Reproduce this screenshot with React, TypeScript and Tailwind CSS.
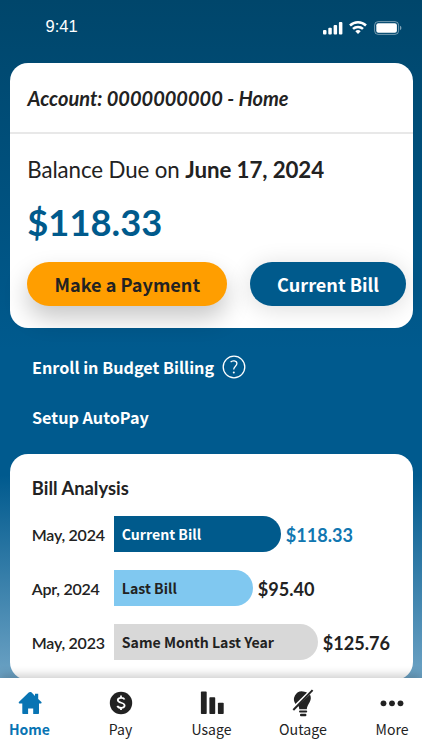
import type { ReactNode } from "react";

const lato = "font-['Lato','Liberation_Sans',sans-serif]";
const source = "font-['Noto_Sans_CJK_SC','Noto_Sans',sans-serif]";

function StatusBar() {
  return (
    <header className="flex h-[63.4px] shrink-0 items-start justify-between pl-[45.5px] pr-[20.5px] pt-[16px] text-white">
      <span className="font-['Liberation_Sans',sans-serif] text-[16.5px] leading-[20px]">9:41</span>
      <div className="flex items-center gap-[6.5px] pt-[5px]">
        <svg width="20" height="14" viewBox="0 0 20 14" fill="currentColor">
          <rect x="0" y="9" width="3.5" height="4.5" rx="1" />
          <rect x="5.3" y="6.8" width="3.5" height="6.7" rx="1" />
          <rect x="10.6" y="4" width="3.5" height="9.5" rx="1" />
          <rect x="15.9" y="1" width="3.5" height="12.5" rx="1" />
        </svg>
        <svg width="18" height="14" viewBox="0 0 18 14" fill="none" stroke="currentColor" strokeWidth="2.5">
          <path d="M1 4.5a11.6 11.6 0 0 1 16 0" />
          <path d="M4 7.9a7.2 7.2 0 0 1 10 0" />
          <path d="M6.3 10.2a4 4 0 0 1 5.4 0L9 13z" fill="currentColor" stroke="none" />
        </svg>
        <svg width="28" height="14" viewBox="0 0 28 14" fill="none">
          <rect x=".6" y=".6" width="24" height="12.8" rx="3.6" stroke="white" strokeOpacity=".45" />
          <rect x="2.3" y="2.3" width="20.6" height="9.4" rx="2" fill="white" />
          <path d="M26 4.8v4.4a2.4 2.4 0 0 0 0-4.4" fill="white" fillOpacity=".5" />
        </svg>
      </div>
    </header>
  );
}

const bills = [
  { date: "May, 2024", label: "Current Bill", amount: "$118.33", bar: "w-[167px] bg-[#005a8c] text-white", price: "text-[#1177b1]" },
  { date: "Apr, 2024", label: "Last Bill", amount: "$95.40", bar: "w-[139px] bg-[#80c8f0] text-[#222]", price: "text-[#222]" },
  { date: "May, 2023", label: "Same Month Last Year", amount: "$125.76", bar: "w-[204px] bg-[#d8d8d8] text-[#222]", price: "text-[#222]" },
];

function Tab({ label, className, labelClass, children }: { label: string; className: string; labelClass: string; children: ReactNode }) {
  return (
    <div className={`flex flex-col items-center pt-[10px] ${className}`}>
      <svg width="30" height="30" viewBox="0 0 30 30" fill="currentColor">{children}</svg>
      <span className={`mt-px whitespace-nowrap leading-[20px] ${source} ${labelClass}`}>{label}</span>
    </div>
  );
}

export default function App() {
  return (
    <div className={`flex h-[750px] w-[422px] flex-col overflow-hidden bg-[linear-gradient(180deg,#00466b_0px,#005a8e_350px,#005a8e_475px,#6ca2c4_678px)] text-[#222] ${lato}`}>
      <StatusBar />
      <section className="ml-[9.5px] h-[265px] w-[403.2px] shrink-0 rounded-[18px] bg-white">
        <div className="flex h-[70.5px] items-center border-b-2 border-[#e8e8e8] pl-[18px] text-[20px] font-bold italic leading-6">
          <span className="whitespace-nowrap">Account: 0000000000 - Home</span>
        </div>
        <div className="pl-[17.8px]">
          <p className="mt-[22px] whitespace-nowrap text-[22.3px] leading-[28px] tracking-[-0.1px]">Balance Due on <span className="font-bold">June 17, 2024</span></p>
          <p className="mt-[17px] text-[36.3px] font-bold leading-[43px] text-[#005a8c]">$118.33</p>
          <div className={`mt-[18px] flex gap-[22.7px] text-[18.1px] font-bold leading-[44px] ${source}`}>
            <button className="h-[44px] w-[200px] rounded-full bg-[#ff9e00] text-center text-[#222] shadow-[0_12px_24px_rgba(0,0,0,0.22)]">Make a Payment</button>
            <button className="h-[44px] w-[156px] rounded-full bg-[#005a8c] text-center text-white shadow-[0_3px_24px_rgba(0,0,0,0.14)]">Current Bill</button>
          </div>
        </div>
      </section>
      <nav className={`h-[126px] shrink-0 pl-8 pt-[25.4px] text-[16.2px] font-bold leading-[26px] text-white ${source}`}>
        <div className="flex items-center gap-2">
          <span>Enroll in Budget Billing</span>
          <svg width="24" height="24" viewBox="0 0 24 24" fill="none" stroke="currentColor" strokeWidth="1.3">
            <circle cx="12" cy="12" r="10.8" />
            <path d="M8.6 7.1c1.8-2.1 6.3-1.5 6.3 1.5 0 2.6-3.2 2.8-3.2 6" />
            <circle cx="11.8" cy="17.6" r="1" fill="currentColor" stroke="none" />
          </svg>
        </div>
        <div className="mt-[24px]">Setup AutoPay</div>
      </nav>
      <section className="ml-[9.5px] h-[226px] w-[403.2px] shrink-0 rounded-[18px] bg-white pl-[22.3px] pt-[22px]">
        <h2 className="text-[18.4px] font-bold leading-6">Bill Analysis</h2>
        <div className="mt-[16px] flex flex-col gap-[18px]">
          {bills.map((b) => (
            <div key={b.date} className="flex h-9 items-center">
              <span className="w-[82px] shrink-0 whitespace-nowrap pt-px text-[16px] font-semibold tracking-[-0.25px] text-[#222]">{b.date}</span>
              <div className={`flex h-9 shrink-0 items-center whitespace-nowrap rounded-r-full pl-2 text-[14.1px] font-bold ${source} ${b.bar}`}>{b.label}</div>
              <span className={`ml-[5px] pt-[2px] text-[18.1px] font-bold ${b.price}`}>{b.amount}</span>
            </div>
          ))}
        </div>
      </section>
      <footer className="relative -mt-[2.3px] flex h-[72px] shrink-0 bg-white shadow-[0_-3px_9px_rgba(0,0,0,0.2)]">
        <Tab label="Home" className="w-[59px] text-[#0874b3]" labelClass="font-bold text-[14px]">
          <path d="M15 4.1q.7-.5 1.4.2L20 7.9V5.7h3.2v5.2l3.2 3.2q.8 1.2-.5 1.3H24v9.9q0 .8-.8.8h-5v-5.5h-5.1v5.5h-5q-.8 0-.8-.8v-9.9H4.4q-1.2-.2-.5-1.3L13.7 4.6Z" />
        </Tab>
        <Tab label="Pay" className="w-[123px]" labelClass="text-[14px]">
          <circle cx="15" cy="15" r="11.2" />
          <path d="M18.5 11.5c-.8-2.3-6.7-2.2-6.7.6 0 3.5 6.8 1.8 6.8 5.4 0 3-6.2 3-7.3.3M15 7.6v2.1m0 10.2V22" fill="none" stroke="white" strokeWidth="1.8" />
        </Tab>
        <Tab label="Usage" className="w-[59px]" labelClass="text-[14px]">
          <rect x="3.9" y="3.6" width="5.8" height="22.5" rx=".8" />
          <rect x="12.4" y="9.2" width="5.8" height="16.9" rx=".8" />
          <rect x="20.9" y="14.8" width="5.8" height="11.3" rx=".8" />
        </Tab>
        <Tab label="Outage" className="w-[124px]" labelClass="text-[14.2px]">
          <path d="M14.8 3.4a8 8 0 0 1 5 1.5L7.8 16.4A8 8 0 0 1 14.8 3.4Z" />
          <path d="M22 6.4c2.9 6.6-2.8 8.8-3.2 14.8h-7.5q0-2-1.2-3.6Z" />
          <path d="M4.7 19.9 23 1.7" fill="none" stroke="white" strokeWidth="1.6" />
          <path d="M5.3 22 24.6 2.1" fill="none" stroke="currentColor" strokeWidth="2" />
          <rect x="11" y="22.4" width="8.2" height="2.1" rx="1" />
          <rect x="12" y="25.7" width="6.4" height="2.5" rx="1" />
        </Tab>
        <Tab label="More" className="w-[54px]" labelClass="text-[14px]">
          <circle cx="6.5" cy="15.3" r="2.9" /><circle cx="15" cy="15.3" r="2.9" /><circle cx="23.5" cy="15.3" r="2.9" />
        </Tab>
      </footer>
    </div>
  );
}
